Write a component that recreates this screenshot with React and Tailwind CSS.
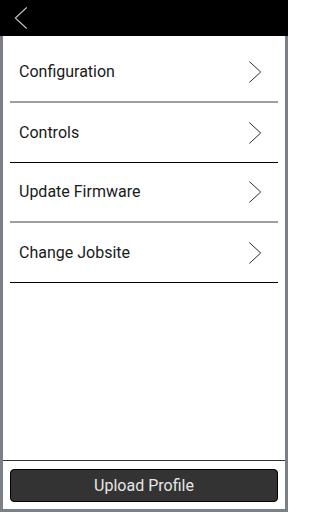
import React from "react";

const items = ["Configuration", "Controls", "Update Firmware", "Change Jobsite"];

const Chevron = ({ className }) => (
  <svg viewBox="0 0 16 26" className={className} fill="none" stroke="currentColor" strokeWidth="1.1">
    <path d="M1.5 1 L14.5 13 L1.5 25" />
  </svg>
);

const App = () => {
  return (
    <div className="w-[288px] h-[512px] flex flex-col bg-white border-x-[3px] border-b-[3px] border-[#7b8087] font-['Roboto',sans-serif]">
      {/* Header */}
      <div className="h-[36px] bg-black flex items-center -mx-[3px] px-[14px]">
        <svg viewBox="0 0 16 26" className="w-[14px] h-[24px] text-[#c8c8c8] rotate-180" fill="none" stroke="currentColor" strokeWidth="1.2">
          <path d="M1.5 1 L14.5 13 L1.5 25" />
        </svg>
      </div>

      {/* Menu list */}
      <div className="flex-1 px-[7px] pt-[7px]">
        {items.map((item, i) => (
          <div
            key={item}
            className={`h-[60px] flex items-center justify-between pl-[9px] pr-[16px] ${
              i % 2 === 0 ? "border-b-2 border-[#a0a0a0]" : "border-b border-black"
            }`}
          >
            <span className="text-[16px] text-[#1a1a1a]">{item}</span>
            <Chevron className="w-[14px] h-[24px] text-[#222]" />
          </div>
        ))}
      </div>

      {/* Footer */}
      <div className="border-t border-[#333] pt-[8px] pb-[7px] px-[7px]">
        <button className="w-full h-[33px] bg-[#333333] border border-black rounded-[4px] text-[16px] text-[#e6e6e6]">
          Upload Profile
        </button>
      </div>
    </div>
  );
};

export default App;
